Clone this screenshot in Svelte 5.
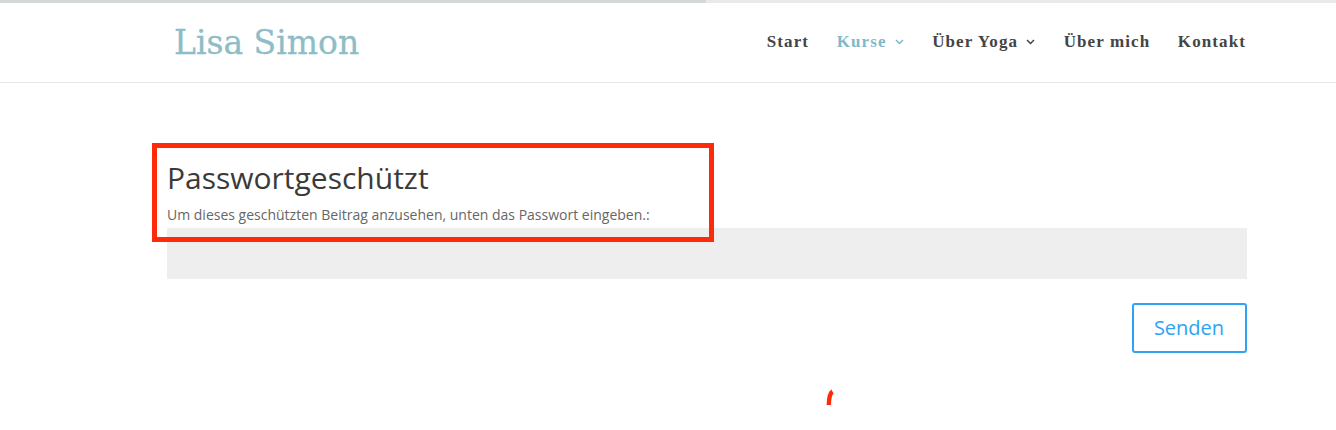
<script>
  const links = [
    { label: "Start" },
    { label: "Kurse", active: true, sub: true },
    { label: "Über Yoga", sub: true },
    { label: "Über mich" },
    { label: "Kontakt" }
  ];
</script>

<div class="page">
  <div class="loader"><span></span></div>

  <header>
    <div class="logo">Lisa Simon</div>
    <nav>
      {#each links as link}
        <a href="#top" class:active={link.active}>
          {link.label}
          {#if link.sub}
            <svg width="11" height="6" viewBox="0 0 11 6" aria-hidden="true">
              <path d="M2 1l3.5 3.5L9 1" fill="none" stroke="currentColor" stroke-width="1.5" />
            </svg>
          {/if}
        </a>
      {/each}
    </nav>
  </header>

  <main>
    <h1>Passwortgeschützt</h1>
    <p>Um dieses geschützten Beitrag anzusehen, unten das Passwort eingeben.:</p>
    <div class="field"></div>
    <div class="actions">
      <button>Senden</button>
    </div>
  </main>

  <div class="highlight"></div>
  <svg class="scribble" width="10" height="17" viewBox="0 0 10 17" aria-hidden="true">
    <path d="M7.5 2.5C5 4 4 8 3.8 16" fill="none" stroke="#ff2a0a" stroke-width="4.4" />
  </svg>
</div>

<style>
  :global(body) {
    background: #fff;
  }

  .page {
    position: relative;
    width: 1336px;
    height: 430px;
    overflow: hidden;
    font-family: "Open Sans", sans-serif;
  }

  .loader {
    height: 3px;
    background: #e8e9e9;
  }

  .loader span {
    display: block;
    width: 706px;
    height: 3px;
    background: #d5d8d8;
  }

  header {
    display: flex;
    justify-content: space-between;
    align-items: center;
    height: 79px;
    padding: 0 90px 0 174px;
    border-bottom: 1px solid #e6e6e6;
  }

  .logo {
    font-family: "DejaVu Serif", serif;
    font-size: 33px;
    color: #8dbdc7;
    -webkit-text-stroke: 0.3px #8dbdc7;
  }

  nav {
    display: flex;
    gap: 27.6px;
    margin-top: -1px;
  }

  nav a {
    display: flex;
    align-items: center;
    gap: 7px;
    font-family: "Liberation Serif", serif;
    font-weight: 700;
    font-size: 17px;
    letter-spacing: 1.1px;
    color: #444;
    text-decoration: none;
  }

  nav a.active {
    color: #7fb8c9;
  }

  main {
    padding: 74px 89px 0 167px;
  }

  h1 {
    margin: 0;
    font-size: 30px;
    font-weight: 400;
    line-height: 41px;
    color: #3a3a3a;
  }

  p {
    margin: 8px 0 0;
    font-size: 14px;
    line-height: 17px;
    color: #666;
  }

  .field {
    height: 51px;
    margin-top: 5px;
    background: #eee;
  }

  .actions {
    display: flex;
    justify-content: flex-end;
    margin-top: 24px;
  }

  button {
    width: 115px;
    height: 50px;
    padding: 0 1px 2px 0;
    background: #fff;
    border: 2px solid #2ea3f2;
    border-radius: 3px;
    font-family: inherit;
    font-size: 20px;
    color: #2ea3f2;
  }

  .highlight {
    position: absolute;
    left: 152px;
    top: 143px;
    width: 552px;
    height: 89px;
    border: 5px solid #ff2a0a;
  }

  .scribble {
    position: absolute;
    left: 825px;
    top: 389px;
  }
</style>
